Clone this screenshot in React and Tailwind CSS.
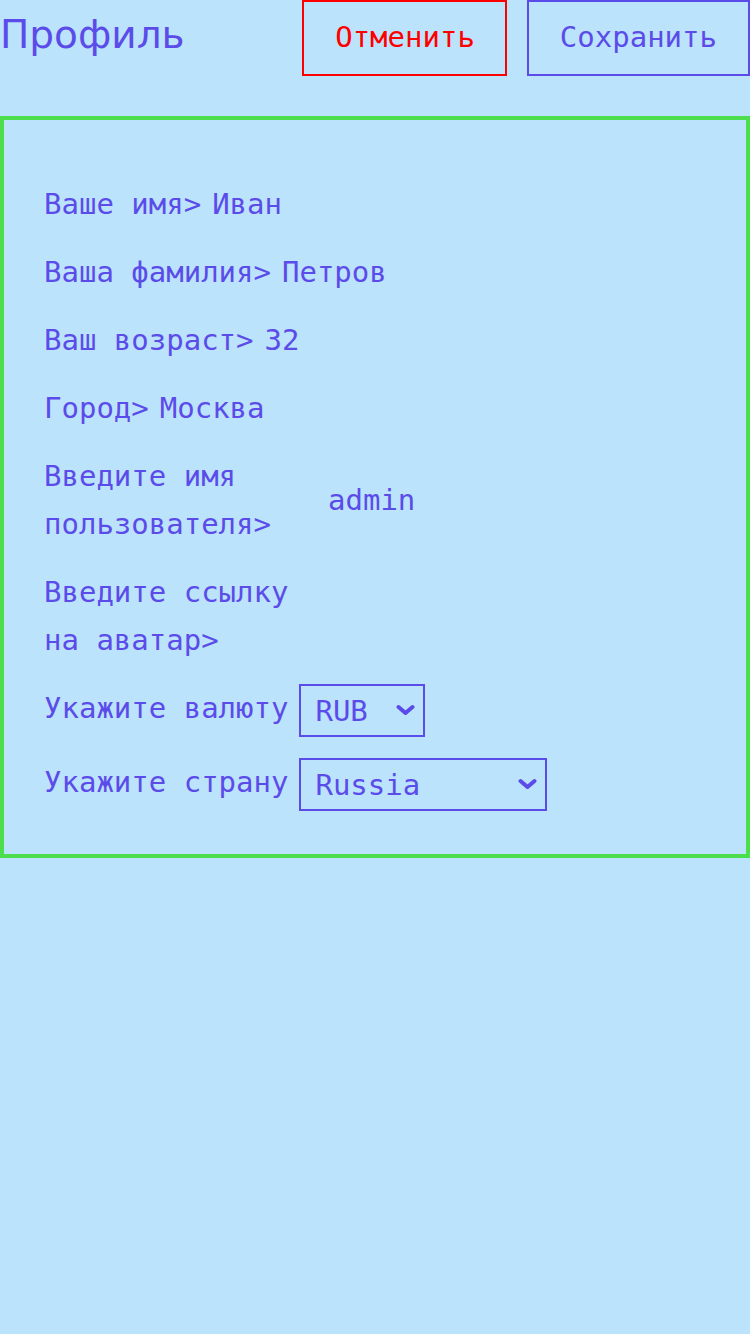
import { useState } from "react";

const mono = "font-['DejaVu_Sans_Mono',monospace]";

function Chevron() {
  return (
    <svg
      className="pointer-events-none absolute right-[10px] top-[26px] -translate-y-1/2"
      width="19"
      height="11"
      viewBox="0 0 19 11"
      fill="none"
    >
      <path d="M2.5 2.5l7 6 7-6" stroke="#5b4cea" strokeWidth="4" strokeLinecap="round" strokeLinejoin="round" />
    </svg>
  );
}

function Row({ label, children, wide, top }) {
  return (
    <div className={`flex gap-[11px] ${top ? "items-start" : "items-center"}`}>
      <span className={`leading-[48px] ${wide ? "w-[273px]" : ""} max-w-[273px]`}>{label}</span>
      {children}
    </div>
  );
}

function TextInput({ value, onChange }) {
  return (
    <input
      value={value}
      onChange={(e) => onChange(e.target.value)}
      className={`${mono} min-w-0 flex-1 bg-transparent text-[29px] leading-[48px] text-[#5b4cea] outline-none`}
    />
  );
}

export default function App() {
  const [form, setForm] = useState({
    name: "Иван",
    lastname: "Петров",
    age: "32",
    city: "Москва",
    username: "admin",
    avatar: "",
    currency: "RUB",
    country: "Russia",
  });

  const set = (key) => (v) => setForm((f) => ({ ...f, [key]: v }));

  return (
    <div className="min-h-screen bg-[#bce3fc] text-[#5b4cea]">
      <div className="flex items-start justify-between">
        <h1 className="font-['DejaVu_Sans',sans-serif] text-[39px] leading-[70px]">Профиль</h1>
        <div className="flex gap-5">
          <button
            className={`${mono} flex h-[76px] items-center border-2 border-[#ff0000] pl-[31px] pr-[30px] text-[29px] text-[#ff0000]`}
          >
            Отменить
          </button>
          <button
            className={`${mono} flex h-[76px] items-center border-2 border-[#5b4cea] px-[31px] text-[29px]`}
          >
            Сохранить
          </button>
        </div>
      </div>

      <div className={`${mono} mt-10 flex flex-col gap-5 border-4 border-[#4cde4c] px-10 pt-[60px] pb-[42px] text-[29px]`}>
        <Row label="Ваше имя>">
          <TextInput value={form.name} onChange={set("name")} />
        </Row>
        <Row label="Ваша фамилия>">
          <TextInput value={form.lastname} onChange={set("lastname")} />
        </Row>
        <Row label="Ваш возраст>">
          <TextInput value={form.age} onChange={set("age")} />
        </Row>
        <Row label="Город>">
          <TextInput value={form.city} onChange={set("city")} />
        </Row>
        <Row label="Введите имя пользователя>" wide>
          <TextInput value={form.username} onChange={set("username")} />
        </Row>
        <Row label="Введите ссылку на аватар>" wide>
          <TextInput value={form.avatar} onChange={set("avatar")} />
        </Row>
        <Row label="Укажите валюту" top>
          <div className="relative h-[54px]">
            <select
              value={form.currency}
              onChange={(e) => set("currency")(e.target.value)}
              className={`${mono} h-[53px] w-[126px] appearance-none border-2 border-[#5b4cea] bg-transparent pt-[3px] pl-[14px] text-[29px] text-[#5b4cea] outline-none`}
            >
              <option>RUB</option>
              <option>USD</option>
              <option>EUR</option>
            </select>
            <Chevron />
          </div>
        </Row>
        <Row label="Укажите страну" top>
          <div className="relative h-[54px]">
            <select
              value={form.country}
              onChange={(e) => set("country")(e.target.value)}
              className={`${mono} h-[53px] w-[248px] appearance-none border-2 border-[#5b4cea] bg-transparent pt-[3px] pl-[14px] text-[29px] text-[#5b4cea] outline-none`}
            >
              <option>Russia</option>
              <option>Kazakhstan</option>
              <option>Belarus</option>
              <option>Armenia</option>
            </select>
            <Chevron />
          </div>
        </Row>
      </div>
    </div>
  );
}
